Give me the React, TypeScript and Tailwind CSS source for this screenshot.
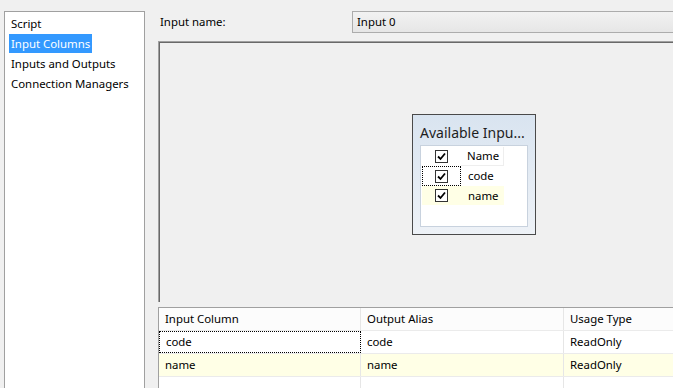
import React from 'react'

const font = { fontFamily: '"Noto Sans", "Open Sans", Arial, sans-serif' }

function Check() {
  return (
    <span className="w-[13px] h-[13px] border border-[#333] bg-white flex items-center justify-center">
      <svg width="9" height="9" viewBox="0 0 9 9">
        <path d="M1 4.5 L3.5 7 L8 1.5" fill="none" stroke="#000" strokeWidth="1.8" />
      </svg>
    </span>
  )
}

export default function App() {
  const pages = ['Script', 'Input Columns', 'Inputs and Outputs', 'Connection Managers']
  const rows = [
    { col: 'code', alias: 'code', usage: 'ReadOnly' },
    { col: 'name', alias: 'name', usage: 'ReadOnly' },
  ]

  return (
    <div className="w-[673px] h-[388px] bg-[#f0f0f0] overflow-hidden flex text-[11.4px] text-black" style={font}>
      {/* Page list */}
      <div className="pl-[4px] pt-[11px] shrink-0">
        <div className="w-[141px] h-[400px] bg-white border border-[#a0a0a0] pt-[1px]">
          {pages.map((p, i) => (
            <div key={p} className="h-[20px] flex items-center pl-[6px]">
              <span className={i === 1 ? 'bg-[#3399ff] text-white px-[2px] -ml-[2px] leading-[19px]' : 'leading-[19px]'}>{p}</span>
            </div>
          ))}
        </div>
      </div>

      {/* Right side */}
      <div className="ml-[13px] flex-1 flex flex-col min-w-0">
        <div className="pt-[11px] flex items-center h-[33px] shrink-0">
          <span className="w-[194px] pl-[2px] shrink-0">Input name:</span>
          <div className="flex-1 h-[22px] border border-[#acacac] border-r-0 bg-gradient-to-b from-[#f2f2f2] to-[#e6e6e6] flex items-center pl-[4px]">
            Input 0
          </div>
        </div>

        {/* Designer canvas */}
        <div className="mt-[8px] h-[261px] shrink-0 relative border-t border-l border-[#a0a0a0] shadow-[inset_1px_1px_0_#696969] bg-[#f0f0f0]">
          <div className="absolute left-[253px] top-[72px] w-[124px] h-[121px] border border-[#4a4a4a] bg-gradient-to-b from-[#d9e4f0] to-[#eef2f7] flex flex-col px-[7px] pb-[7px]">
            <div className="h-[30px] flex items-end pb-[3px] text-[14px] text-[#1e1e1e] whitespace-nowrap leading-[18px]">
              Available Inpu...
            </div>
            <div className="flex-1 bg-white border border-[#c8d2de] pt-[1px] pl-[1px]">
              <div className="flex h-[19px] items-center">
                <div className="w-[39px] flex justify-center"><Check /></div>
                <div className="w-[43px] h-full flex items-center pl-[6px] border-b border-r border-[#eeeeee]">Name</div>
              </div>
              <div className="flex h-[20px] items-center">
                <div className="w-[39px] h-full flex justify-center items-center border border-dotted border-black"><Check /></div>
                <div className="w-[43px] h-full flex items-center pl-[7px] bg-white">code</div>
              </div>
              <div className="flex h-[19px] items-center bg-[#ffffe6] w-[82px]">
                <div className="w-[39px] flex justify-center"><Check /></div>
                <div className="w-[43px] flex items-center pl-[7px]">name</div>
              </div>
            </div>
          </div>
        </div>

        {/* Column grid */}
        <div className="mt-[5px] flex-1 bg-white border-t border-l border-[#a0a0a0]">
          <div className="flex h-[23px] border-b border-[#ebebeb] bg-[#fcfcfc]">
            <div className="w-[202px] pl-[6px] flex items-center border-r border-[#e6e6e6]">Input Column</div>
            <div className="w-[203px] pl-[6px] flex items-center border-r border-[#e6e6e6]">Output Alias</div>
            <div className="flex-1 pl-[6px] flex items-center">Usage Type</div>
          </div>
          {rows.map((r, i) => (
            <div key={r.col} className={`flex h-[23px] border-b border-[#ebebeb] ${i === 1 ? 'bg-[#ffffe6]' : 'bg-white'}`}>
              <div className={`w-[202px] pl-[6px] flex items-center ${i === 0 ? 'border border-dotted border-black' : 'border-r border-[#e6e6e6]'}`}>{r.col}</div>
              <div className="w-[203px] pl-[6px] flex items-center border-r border-[#e6e6e6]">{r.alias}</div>
              <div className="flex-1 pl-[6px] flex items-center">{r.usage}</div>
            </div>
          ))}
          <div className="flex h-[20px]">
            <div className="w-[202px] border-r border-[#e6e6e6]" />
            <div className="w-[203px] border-r border-[#e6e6e6]" />
          </div>
        </div>
      </div>
    </div>
  )
}
